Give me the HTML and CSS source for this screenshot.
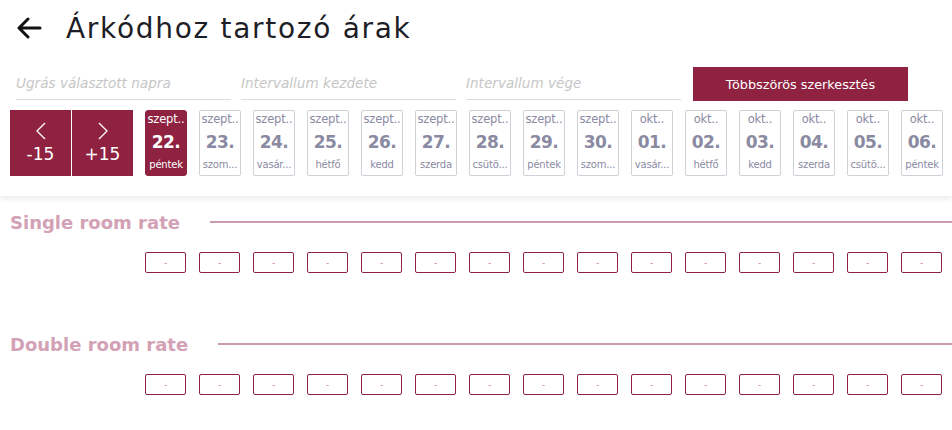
FILE: index.html
```html
<!DOCTYPE html>
<html lang="hu">
<head>
<meta charset="utf-8">
<title>Árkódhoz tartozó árak</title>
<link rel="stylesheet" href="styles.css">
</head>
<body>
<header class="top">
  <div class="title-row">
    <svg class="back" width="26" height="22" viewBox="0 0 26 22"><path d="M24 11H3M12 2L3 11l9 9" fill="none" stroke="#111" stroke-width="3" stroke-linecap="round" stroke-linejoin="round"/></svg>
    <h1>Árkódhoz tartozó árak</h1>
  </div>
  <div class="filters">
    <div class="field">Ugrás választott napra</div>
    <div class="field">Intervallum kezdete</div>
    <div class="field">Intervallum vége</div>
    <button class="multi">Többszörös szerkesztés</button>
  </div>
  <div class="days">
    <div class="nav">
      <div class="nav-btn"><svg width="12" height="18" viewBox="0 0 12 18"><path d="M10 1L2 9l8 8" fill="none" stroke="#fff" stroke-width="1.3"/></svg><span>-15</span></div>
      <div class="nav-btn"><svg width="12" height="18" viewBox="0 0 12 18"><path d="M2 1l8 8-8 8" fill="none" stroke="#fff" stroke-width="1.3"/></svg><span>+15</span></div>
    </div>
    <div class="cards">
      <div class="card active"><span class="m">szept..</span><span class="d">22.</span><span class="w">péntek</span></div>
      <div class="card"><span class="m">szept..</span><span class="d">23.</span><span class="w">szom...</span></div>
      <div class="card"><span class="m">szept..</span><span class="d">24.</span><span class="w">vasár...</span></div>
      <div class="card"><span class="m">szept..</span><span class="d">25.</span><span class="w">hétfő</span></div>
      <div class="card"><span class="m">szept..</span><span class="d">26.</span><span class="w">kedd</span></div>
      <div class="card"><span class="m">szept..</span><span class="d">27.</span><span class="w">szerda</span></div>
      <div class="card"><span class="m">szept..</span><span class="d">28.</span><span class="w">csütö...</span></div>
      <div class="card"><span class="m">szept..</span><span class="d">29.</span><span class="w">péntek</span></div>
      <div class="card"><span class="m">szept..</span><span class="d">30.</span><span class="w">szom...</span></div>
      <div class="card"><span class="m">okt..</span><span class="d">01.</span><span class="w">vasár...</span></div>
      <div class="card"><span class="m">okt..</span><span class="d">02.</span><span class="w">hétfő</span></div>
      <div class="card"><span class="m">okt..</span><span class="d">03.</span><span class="w">kedd</span></div>
      <div class="card"><span class="m">okt..</span><span class="d">04.</span><span class="w">szerda</span></div>
      <div class="card"><span class="m">okt..</span><span class="d">05.</span><span class="w">csütö...</span></div>
      <div class="card"><span class="m">okt..</span><span class="d">06.</span><span class="w">péntek</span></div>
    </div>
  </div>
</header>
<main>
  <section class="rate">
    <h2><span>Single room rate</span><i class="line"></i></h2>
    <div class="boxes">
      <div class="box">-</div><div class="box">-</div><div class="box">-</div><div class="box">-</div><div class="box">-</div>
      <div class="box">-</div><div class="box">-</div><div class="box">-</div><div class="box">-</div><div class="box">-</div>
      <div class="box">-</div><div class="box">-</div><div class="box">-</div><div class="box">-</div><div class="box">-</div>
    </div>
  </section>
  <section class="rate">
    <h2><span>Double room rate</span><i class="line"></i></h2>
    <div class="boxes">
      <div class="box">-</div><div class="box">-</div><div class="box">-</div><div class="box">-</div><div class="box">-</div>
      <div class="box">-</div><div class="box">-</div><div class="box">-</div><div class="box">-</div><div class="box">-</div>
      <div class="box">-</div><div class="box">-</div><div class="box">-</div><div class="box">-</div><div class="box">-</div>
    </div>
  </section>
</main>
</body>
</html>
```
FILE: styles.css
```css
* { box-sizing: border-box; }
html, body { margin: 0; padding: 0; background: #fff; }
body {
  font-family: "DejaVu Sans", "Noto Sans", sans-serif;
  width: 952px;
  height: 430px;
  overflow: hidden;
}
.top {
  height: 196px;
  padding: 0 0 0 10px;
  box-shadow: 0 3px 6px rgba(0,0,0,0.08);
  position: relative;
  z-index: 1;
}
.title-row {
  display: flex;
  align-items: center;
  height: 56px;
  padding-left: 6px;
}
.back { display: block; margin-right: 24px; }
h1 {
  margin: 0;
  font-size: 28px;
  font-weight: 500;
  color: #1e1e26;
  letter-spacing: 1.7px;
}
.filters {
  display: flex;
  align-items: flex-end;
  height: 44px;
  padding-left: 6px;
}
.field {
  width: 215px;
  margin-right: 10px;
  height: 33px;
  padding-top: 8px;
  border-bottom: 1px solid #dcdcdc;
  color: #c6c6c6;
  font-style: italic;
  font-size: 13.6px;
  white-space: nowrap;
  overflow: hidden;
}
.field:nth-child(3) { margin-right: 12px; }
.multi {
  width: 215px;
  height: 34px;
  margin-bottom: -1px;
  border: 0;
  background: #8e2240;
  color: #fff;
  font-family: inherit;
  font-size: 12.8px;
}
.days {
  display: flex;
  margin-top: 10px;
  height: 66px;
}
.nav { display: flex; gap: 1px; margin-right: 12px; }
.nav-btn {
  width: 61px;
  height: 66px;
  background: #8e2240;
  color: #fff;
  display: flex;
  flex-direction: column;
  align-items: center;
  justify-content: center;
  gap: 4px;
  font-size: 17px;
}
.nav-btn svg { display: block; }
.cards { display: flex; gap: 12px; }
.card {
  width: 42px;
  height: 66px;
  border: 1px solid #d0d0d8;
  border-radius: 2px;
  display: flex;
  flex-direction: column;
  align-items: center;
  color: #8a8aa2;
  overflow: hidden;
  white-space: nowrap;
}
.card .m { font-size: 11.5px; margin-top: 1px; line-height: 14px; letter-spacing: -0.2px; }
.card .d { font-size: 17px; font-weight: bold; margin-top: 6px; line-height: 20px; letter-spacing: -0.5px; }
.card .w { font-size: 10px; margin-top: 7px; line-height: 11px; letter-spacing: -0.2px; }
.card.active { background: #8e2240; border-color: #8e2240; color: #fff; border-radius: 3px; }
main { padding-top: 15px; }
.rate { height: 122px; }
.rate:last-child { height: auto; }
h2 {
  margin: 0 0 0 10px;
  display: flex;
  align-items: center;
  height: 22px;
  font-size: 18px;
  font-weight: bold;
  color: #d3a1b5;
}
h2 span { white-space: nowrap; }
h2 .line {
  flex: 1;
  height: 2px;
  background: #c99bb0;
  margin-left: 30px;
}
.boxes {
  display: flex;
  gap: 13px;
  padding-left: 145px;
  margin-top: 19px;
}
.box {
  width: 41px;
  height: 21px;
  border: 1px solid #8e2240;
  border-radius: 2px;
  display: flex;
  align-items: center;
  justify-content: center;
  font-size: 9px;
  color: #c98a90;
}
```
